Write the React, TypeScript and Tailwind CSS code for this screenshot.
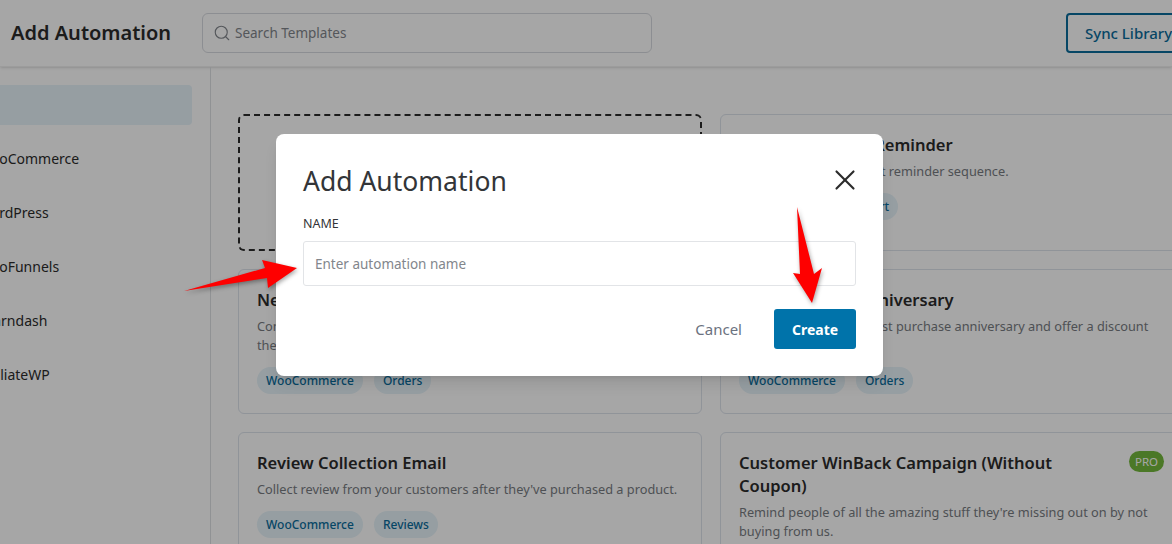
import { Search, X } from 'lucide-react'

const sidebarItems = ['WooCommerce', 'WordPress', 'WooFunnels', 'Learndash', 'AffiliateWP']

const Tag = ({ label }: { label: string }) => (
  <span className="flex h-[27px] items-center rounded-full bg-[#e6f3f9] px-[9px] text-[12px] font-medium text-[#0a6c9c]">
    {label}
  </span>
)

const Card = ({
  title,
  description,
  tags,
  pro,
  className,
}: {
  title: string
  description: string
  tags: string[]
  pro?: boolean
  className: string
}) => (
  <div className={`relative overflow-hidden rounded-md border border-[#dde3ec] px-[18px] pt-[18px] ${className}`}>
    {pro ? (
      <span className="absolute right-[19px] top-[18px] flex h-[21px] w-[35px] items-center justify-center rounded-full bg-[#74b83c] text-[11.5px] text-white">
        PRO
      </span>
    ) : null}
    <div className="pr-[50px] text-[16.5px] font-semibold leading-[23px] text-[#2b2b2b]">{title}</div>
    <div className="mt-[6px] text-[12.75px] leading-[19px] text-[#787c82]">{description}</div>
    <div className="mt-[12px] flex gap-[11px]">
      {tags.map((tag) => (
        <Tag key={tag} label={tag} />
      ))}
    </div>
  </div>
)

export default function App() {
  return (
    <div className="relative h-[544px] w-[1172px] overflow-hidden bg-white font-['Noto_Sans',sans-serif]">
      <header className="flex h-[67px] items-center border-b border-[#f0f0f0] bg-white pl-[11px] shadow-sm">
        <div className="w-[191px] shrink-0 text-[20px] font-semibold text-[#2b2b2b]">Add Automation</div>
        <div className="flex h-[40px] w-[450px] shrink-0 items-center gap-[4px] rounded-md border border-[#d8dbe0] px-[10px] text-[13.5px] text-[#82868c]">
          <Search size={18} strokeWidth={1.5} />
          Search Templates
        </div>
        <div className="ml-[414px] flex h-[40px] w-[130px] shrink-0 items-center rounded-[4px] border-2 border-[#0a6c9c] pl-[17px] text-[15px] font-medium text-[#0a6c9c]">
          Sync Library
        </div>
      </header>

      <div className="flex h-[477px]">
        <aside className="w-[211px] shrink-0 border-r border-[#dde0e4] pt-[18px]">
          <div className="h-[40px] w-[192px] rounded-r-[4px] bg-[#e6f3f9]" />
          <div className="mt-[6px]">
            {sidebarItems.map((item) => (
              <div key={item} className="ml-[-22px] flex h-[54px] items-center whitespace-nowrap text-[14px] text-[#2b2b2b]">
                {item}
              </div>
            ))}
          </div>
        </aside>

        <main className="grid grid-cols-[464px_464px] gap-[18px] pl-[27px] pt-[47px]">
          <div className="h-[137px] rounded-md border-2 border-dashed border-[#2b2b2b]" />
          <Card
            className="h-[137px]"
            title="Abandoned Cart Reminder"
            description="Send an abandoned cart reminder sequence."
            tags={['WooCommerce', 'Cart']}
          />
          <Card
            className="h-[145px]"
            title="New Customer Welcome"
            description="Convert first-time buyers into loyal customers with a thoughtful note the day after they order."
            tags={['WooCommerce', 'Orders']}
          />
          <Card
            className="h-[145px]"
            title="First Purchase Anniversary"
            description="Celebrate customer's first purchase anniversary and offer a discount code."
            tags={['WooCommerce', 'Orders']}
          />
          <Card
            className="h-[145px]"
            title="Review Collection Email"
            description="Collect review from your customers after they've purchased a product."
            tags={['WooCommerce', 'Reviews']}
          />
          <Card
            className="h-[145px]"
            title="Customer WinBack Campaign (Without Coupon)"
            description="Remind people of all the amazing stuff they're missing out on by not buying from us."
            tags={[]}
            pro
          />
        </main>
      </div>

      <div className="absolute inset-0 bg-black/35" />

      <div className="absolute left-[276px] top-[134px] h-[242px] w-[607px] rounded-lg bg-white px-[27px] pt-[28px] shadow-lg">
        <div className="flex items-center justify-between">
          <div className="text-[26.5px] leading-[38px] text-[#333538]">Add Automation</div>
          <X size={34} strokeWidth={1.5} className="mr-[-6px] my-[-4px] -translate-y-px text-[#2b2b2b]" />
        </div>
        <div className="mt-[15px] text-[12.5px] leading-[18px] text-[#333538]">NAME</div>
        <div className="mt-[8px] flex h-[45px] items-center rounded-[3px] border border-[#e2e4e7] pl-[11px] pt-[2px] text-[13.5px] text-[#82868c]">
          Enter automation name
        </div>
        <div className="mt-[23px] flex items-center justify-end">
          <span className="mr-[32px] text-[15px] text-[#6b7280]">Cancel</span>
          <div className="flex h-[40px] w-[82px] items-center justify-center rounded-[3px] bg-[#0073aa] text-[14px] font-bold text-white">
            Create
          </div>
        </div>
      </div>

      <svg className="absolute inset-0 drop-shadow-[1px_2px_2px_rgba(0,0,0,0.35)]" width="1172" height="544">
        <polygon points="184,291 265,268 262,260 297,268 268,288 267,278" fill="#fe0000" />
        <polygon points="797,207 814,274 822,268 812,303 793,273 800,274" fill="#fe0000" />
      </svg>
    </div>
  )
}
